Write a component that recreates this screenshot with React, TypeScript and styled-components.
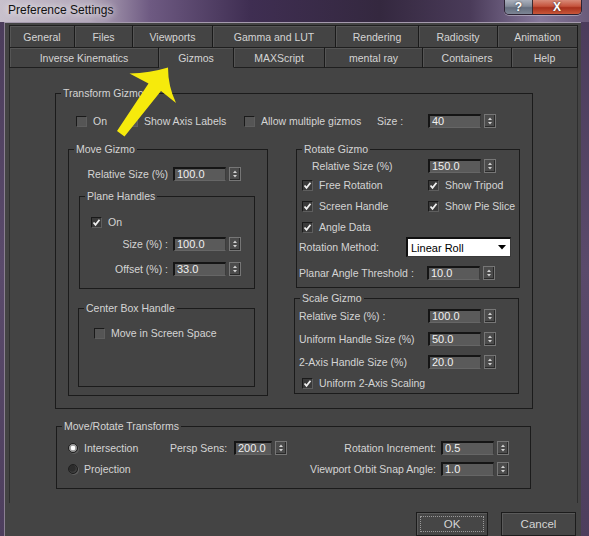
import React from 'react';
import styled, { createGlobalStyle } from 'styled-components';

const GlobalStyle = createGlobalStyle`
    html, body {
        margin: 0;
        padding: 0;
        background: #4e3f5e;
    }
    body {
        font-family: "Liberation Sans", Arial, sans-serif;
    }
`

const Window = styled.div`
    position: relative;
    width: 589px;
    height: 536px;
    overflow: hidden;
    display: flex;
    flex-direction: column;
    background: linear-gradient(180deg, #4a3b5a 0%, #5a4a6b 50%, #4d3e5d 100%);
`

const TitleBar = styled.div`
    height: 22px;
    flex-shrink: 0;
    display: flex;
    justify-content: space-between;
    align-items: flex-start;
    background: linear-gradient(90deg, #c8c0cc 0px, #b3a8ba 90px, #6e5a82 150px, #3f2e52 250px, #34283f 380px, #4a3b59 470px, #85779a 540px, #6a5b7a 589px);
`

const Title = styled.span`
    margin: 2px 0 0 8px;
    font-size: 12px;
    line-height: 16px;
    color: #111;
    text-shadow: 0 0 6px rgba(255, 255, 255, 0.8), 0 0 10px rgba(255, 255, 255, 0.6);
`

const CaptionGroup = styled.div`
    display: flex;
    margin-right: 7px;
    border: 1px solid #2c2233;
    border-top: none;
    border-radius: 0 0 5px 5px;
    overflow: hidden;
    box-shadow: 0 1px 0 rgba(255, 255, 255, 0.35);
`

const CaptionButton = styled.div<{ $close?: boolean }>`
    width: ${p => p.$close ? 48 : 27}px;
    height: 14px;
    display: flex;
    align-items: center;
    justify-content: center;
    font-size: 12px;
    font-weight: bold;
    color: #fff;
    text-shadow: 0 0 2px #333;
    background: ${p => p.$close
        ? 'linear-gradient(180deg, #d88a78 0%, #c5533c 45%, #a8301c 55%, #c9573a 100%)'
        : 'linear-gradient(180deg, #aab0bc 0%, #838b99 45%, #656e7e 55%, #7d8595 100%)'};
    border-left: ${p => p.$close ? '1px solid #3a2a30' : 'none'};
`

const Frame = styled.div`
    flex: 1;
    display: flex;
    padding: 0 8px 0 4px;
`

const Dialog = styled.div`
    flex: 1;
    display: flex;
    flex-direction: column;
    padding: 2px 3px 0 4px;
    background: #444444;
    border-top: 1px solid #a59bae;
    border-left: 1px solid #8b8093;
    color: #d4d4d4;
    font-size: 10.5px;
`

const TabRow = styled.div<{ $h: number }>`
    display: flex;
    height: ${p => p.$h}px;
`

const Tab = styled.div<{ $w: number; $active?: boolean; $bottom?: boolean }>`
    box-sizing: border-box;
    width: ${p => p.$w}px;
    display: flex;
    align-items: center;
    justify-content: center;
    background: #444444;
    border-top: 1px solid #1f1f1f;
    border-right: 1px solid #1a1a1a;
    border-bottom: ${p => p.$bottom ? (p.$active ? '1px solid #444444' : '1px solid #1f1f1f') : 'none'};
    box-shadow: inset 1px 1px 0 #555555;
    &:first-child {
        border-left: 1px solid #1f1f1f;
    }
`

const Panel = styled.div`
    box-sizing: border-box;
    height: 435px;
    border-left: 1px solid #2e2e2e;
    border-right: 1px solid #2e2e2e;
    padding-top: 25px;
`

const GroupBox = styled.div<{ $w: number; $h: number; $ml?: number; $mt?: number }>`
    position: relative;
    box-sizing: border-box;
    width: ${p => p.$w}px;
    height: ${p => p.$h}px;
    margin-left: ${p => p.$ml ?? 0}px;
    margin-top: ${p => p.$mt ?? 0}px;
    border: 1px solid #1b1b1b;
    flex-shrink: 0;
`

const GroupTitle = styled.span`
    position: absolute;
    top: -7px;
    left: 5px;
    padding: 0 2px;
    line-height: 13px;
    background: #444444;
    white-space: nowrap;
`

const Row = styled.div<{ $mt?: number; $pl?: number; $h?: number }>`
    display: flex;
    align-items: center;
    height: ${p => p.$h ?? 14}px;
    margin-top: ${p => p.$mt ?? 0}px;
    padding-left: ${p => p.$pl ?? 0}px;
`

const Label = styled.span<{ $w: number; $right?: boolean }>`
    flex-shrink: 0;
    width: ${p => p.$w}px;
    text-align: ${p => p.$right ? 'right' : 'left'};
    white-space: nowrap;
    line-height: 14px;
`

const Columns = styled.div`
    display: flex;
    align-items: flex-start;
    margin-top: 21px;
    padding-left: 12px;
`

const RightColumn = styled.div`
    display: flex;
    flex-direction: column;
    margin-left: 28px;
`

const ValueBox = styled.div<{ $w: number; $gap: number }>`
    box-sizing: border-box;
    width: ${p => p.$w}px;
    height: 14px;
    margin-left: ${p => p.$gap}px;
    padding-left: 2px;
    background: #5a5a5a;
    border-top: 2px solid #151515;
    border-left: 2px solid #151515;
    border-right: 1px solid #3c3c3c;
    border-bottom: 1px solid #666666;
    color: #f0f0f0;
    font-size: 11px;
    line-height: 11px;
`

const SpinBox = styled.div`
    box-sizing: border-box;
    width: 12px;
    height: 14px;
    margin-left: 3px;
    display: flex;
    align-items: center;
    justify-content: center;
    background: #4b4b4b;
    border: 1px solid #767676;
    box-shadow: inset -1px -1px 0 #2a2a2a;
`

const CheckItem = styled.span<{ $w?: number }>`
    display: inline-flex;
    align-items: center;
    gap: 6px;
    height: 14px;
    white-space: nowrap;
    width: ${p => p.$w ? `${p.$w}px` : 'auto'};
    flex-shrink: 0;
`

const CheckBox = styled.span<{ $checked?: boolean }>`
    box-sizing: border-box;
    width: 11px;
    height: 11px;
    display: flex;
    align-items: center;
    justify-content: center;
    background: ${p => p.$checked ? '#3a3a3a' : '#555555'};
    border-top: 1px solid #1a1a1a;
    border-left: 1px solid #1a1a1a;
    border-right: 1px solid #5e5e5e;
    border-bottom: 1px solid #5e5e5e;
`

const CheckGrid = styled.div`
    display: grid;
    grid-template-columns: 126px auto;
    grid-auto-rows: 14px;
    row-gap: 7px;
    margin-top: 5px;
    padding-left: 5px;
`

const Dropdown = styled.div`
    box-sizing: border-box;
    width: 105px;
    height: 20px;
    display: flex;
    align-items: center;
    justify-content: space-between;
    padding: 0 4px 0 3px;
    background: #ffffff;
    color: #000;
    font-size: 11px;
    border-top: 2px solid #101010;
    border-left: 2px solid #101010;
    border-right: 1px solid #3a3a3a;
    border-bottom: 1px solid #3a3a3a;
`

const RadioItem = styled.span`
    display: inline-flex;
    align-items: center;
    gap: 6px;
    height: 14px;
`

const RadioDot = styled.span<{ $on?: boolean }>`
    box-sizing: border-box;
    width: 10px;
    height: 10px;
    border-radius: 50%;
    background: ${p => p.$on
        ? 'radial-gradient(circle, #ffffff 0 2px, #9a9a9a 2.6px)'
        : 'radial-gradient(circle at 40% 40%, #2c2c2c 0 3px, #3e3e3e 4px)'};
    border: 1px solid #1e1e1e;
    box-shadow: 1px 1px 0 #5e5e5e;
`

const TransformGrid = styled.div`
    display: grid;
    grid-template-columns: 102px 117px 149px auto;
    grid-auto-rows: 14px;
    row-gap: 7px;
    align-items: center;
    padding: 14px 0 0 11px;
`

const Cell = styled.div`
    display: flex;
    align-items: center;
`

const ButtonRow = styled.div`
    display: flex;
    justify-content: flex-end;
    gap: 13px;
    margin-top: 9px;
    padding-right: 2px;
`

const DialogButton = styled.div<{ $w: number }>`
    box-sizing: border-box;
    width: ${p => p.$w}px;
    height: 24px;
    padding: 3px;
    background: #464646;
    border: 1px solid #1c1c1c;
    box-shadow: inset 1px 1px 0 #5a5a5a;
    font-size: 11.5px;
`

const ButtonFace = styled.div<{ $focus?: boolean }>`
    height: 100%;
    box-sizing: border-box;
    display: flex;
    align-items: center;
    justify-content: center;
    border: 1px dotted ${p => p.$focus ? '#9a9a9a' : 'transparent'};
`

const ArrowLayer = styled.svg`
    position: absolute;
    left: 0;
    top: 0;
    pointer-events: none;
`

function Spinner() {
    return (
        <SpinBox>
            <svg width="8" height="12" viewBox="0 0 8 12">
                <path d="M2 5 L4 2.5 L6 5 Z" fill="#d2d2d2" />
                <path d="M2 7 L4 9.5 L6 7 Z" fill="#d2d2d2" />
            </svg>
        </SpinBox>
    );
}

function Field({ label, value, labelW, right, pl, mt, w = 53, gap = 5 }: {
    label: string; value: string; labelW: number; right?: boolean; pl?: number; mt?: number; w?: number; gap?: number;
}) {
    return (
        <Row $mt={mt} $pl={pl}>
            <Label $w={labelW} $right={right}>{label}</Label>
            <ValueBox $w={w} $gap={gap}>{value}</ValueBox>
            <Spinner />
        </Row>
    );
}

function Check({ label, checked, w }: { label: string; checked?: boolean; w?: number }) {
    return (
        <CheckItem $w={w}>
            <CheckBox $checked={checked}>
                {checked && (
                    <svg width="9" height="9" viewBox="0 0 9 9">
                        <path d="M1.5 4.5 L3.5 6.8 L7.5 1.8" stroke="#f0f0f0" strokeWidth="1.8" fill="none" />
                    </svg>
                )}
            </CheckBox>
            {label}
        </CheckItem>
    );
}

const row1: [string, number][] = [
    ['General', 66], ['Files', 58], ['Viewports', 80], ['Gamma and LUT', 123],
    ['Rendering', 83], ['Radiosity', 79], ['Animation', 80],
];

const row2: [string, number][] = [
    ['Inverse Kinematics', 150], ['Gizmos', 75], ['MAXScript', 91],
    ['mental ray', 98], ['Containers', 89], ['Help', 66],
];

function App() {
    return (
        <Window>
            <GlobalStyle />
            <TitleBar>
                <Title>Preference Settings</Title>
                <CaptionGroup>
                    <CaptionButton>?</CaptionButton>
                    <CaptionButton $close>X</CaptionButton>
                </CaptionGroup>
            </TitleBar>
            <Frame>
                <Dialog>
                    <TabRow $h={22}>
                        {row1.map(([name, w]) => <Tab key={name} $w={w}>{name}</Tab>)}
                    </TabRow>
                    <TabRow $h={21}>
                        {row2.map(([name, w]) => (
                            <Tab key={name} $w={w} $bottom $active={name === 'Gizmos'}>{name}</Tab>
                        ))}
                    </TabRow>
                    <Panel>
                        <GroupBox $w={478} $h={316} $ml={45}>
                            <GroupTitle>Transform Gizmo</GroupTitle>
                            <Row $mt={20} $pl={20}>
                                <Check label="On" w={51} />
                                <Check label="Show Axis Labels" w={117} />
                                <Check label="Allow multiple gizmos" w={133} />
                                <Label $w={46}>Size :</Label>
                                <ValueBox $w={53} $gap={5}>40</ValueBox>
                                <Spinner />
                            </Row>
                            <Columns>
                                <GroupBox $w={200} $h={247}>
                                    <GroupTitle>Move Gizmo</GroupTitle>
                                    <Field label="Relative Size (%)" value="100.0" labelW={99} right mt={17} />
                                    <GroupBox $w={176} $h={93} $ml={10} $mt={15}>
                                        <GroupTitle>Plane Handles</GroupTitle>
                                        <Row $mt={18} $pl={11}>
                                            <Check label="On" checked />
                                        </Row>
                                        <Field label="Size (%) :" value="100.0" labelW={88} right mt={8} />
                                        <Field label="Offset (%) :" value="33.0" labelW={88} right mt={11} />
                                    </GroupBox>
                                    <GroupBox $w={177} $h={79} $ml={9} $mt={19}>
                                        <GroupTitle>Center Box Handle</GroupTitle>
                                        <Row $mt={17} $pl={15}>
                                            <Check label="Move in Screen Space" />
                                        </Row>
                                    </GroupBox>
                                </GroupBox>
                                <RightColumn>
                                    <GroupBox $w={224} $h={139}>
                                        <GroupTitle>Rotate Gizmo</GroupTitle>
                                        <Field label="Relative Size (%)" value="150.0" labelW={116} pl={15} mt={9} gap={0} />
                                        <CheckGrid>
                                            <Check label="Free Rotation" checked />
                                            <Check label="Show Tripod" checked />
                                            <Check label="Screen Handle" checked />
                                            <Check label="Show Pie Slice" checked />
                                            <Check label="Angle Data" checked />
                                        </CheckGrid>
                                        <Row $mt={3} $pl={2} $h={20}>
                                            <Label $w={107}>Rotation Method:</Label>
                                            <Dropdown>
                                                <span>Linear Roll</span>
                                                <svg width="8" height="5" viewBox="0 0 8 5">
                                                    <path d="M0 0 L8 0 L4 4.5 Z" fill="#000" />
                                                </svg>
                                            </Dropdown>
                                        </Row>
                                        <Field label="Planar Angle Threshold :" value="10.0" labelW={128} pl={2} mt={9} gap={0} />
                                    </GroupBox>
                                    <GroupBox $w={225} $h={96} $ml={-2} $mt={10}>
                                        <GroupTitle>Scale Gizmo</GroupTitle>
                                        <Field label="Relative Size (%) :" value="100.0" labelW={129} pl={4} mt={10} gap={0} />
                                        <Field label="Uniform Handle Size (%)" value="50.0" labelW={129} pl={4} mt={9} gap={0} />
                                        <Field label="2-Axis Handle Size (%)" value="20.0" labelW={129} pl={4} mt={9} gap={0} />
                                        <Row $mt={7} $pl={7}>
                                            <Check label="Uniform 2-Axis Scaling" checked />
                                        </Row>
                                    </GroupBox>
                                </RightColumn>
                            </Columns>
                        </GroupBox>
                        <GroupBox $w={475} $h={63} $ml={46} $mt={17}>
                            <GroupTitle>Move/Rotate Transforms</GroupTitle>
                            <TransformGrid>
                                <RadioItem><RadioDot $on />Intersection</RadioItem>
                                <Cell>
                                    <Label $w={64}>Persp Sens:</Label>
                                    <ValueBox $w={38} $gap={0}>200.0</ValueBox>
                                    <Spinner />
                                </Cell>
                                <Label $w={149} $right>Rotation Increment:</Label>
                                <Cell>
                                    <ValueBox $w={53} $gap={5}>0.5</ValueBox>
                                    <Spinner />
                                </Cell>
                                <RadioItem><RadioDot />Projection</RadioItem>
                                <span />
                                <Label $w={149} $right>Viewport Orbit Snap Angle:</Label>
                                <Cell>
                                    <ValueBox $w={53} $gap={5}>1.0</ValueBox>
                                    <Spinner />
                                </Cell>
                            </TransformGrid>
                        </GroupBox>
                    </Panel>
                    <ButtonRow>
                        <DialogButton $w={72}><ButtonFace $focus>OK</ButtonFace></DialogButton>
                        <DialogButton $w={75}><ButtonFace>Cancel</ButtonFace></DialogButton>
                    </ButtonRow>
                </Dialog>
            </Frame>
            <ArrowLayer width="589" height="536" viewBox="0 0 589 536">
                <path
                    d="M168 67.5 Q150 73 129.5 73.5 L148.5 83.5 L117 131 L124.5 136.5 L161 91 L176 103 Q168 86 168 67.5 Z"
                    fill="#f6ea0c"
                />
            </ArrowLayer>
        </Window>
    );
}

export default App;
